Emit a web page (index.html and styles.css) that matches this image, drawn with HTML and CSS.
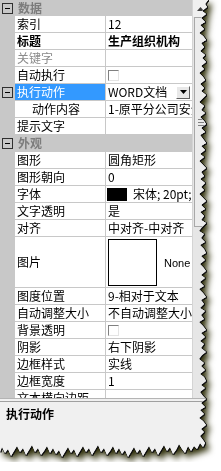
FILE: index.html
```html
<!DOCTYPE html>
<html>
<head>
<meta charset="utf-8">
<link rel="stylesheet" href="styles.css">
</head>
<body>
<div class="sheet">
  <div class="paper">
    <div class="top">
      <div class="grid">
        <div class="hdr first"><span class="tog"></span><span class="htext">数据</span></div>
        <div class="row"><span class="gut"></span><span class="name">索引</span><span class="val">12</span></div>
        <div class="row"><span class="gut"></span><span class="name b">标题</span><span class="val b">生产组织机构</span></div>
        <div class="row"><span class="gut"></span><span class="name dis">关键字</span><span class="val"></span></div>
        <div class="row"><span class="gut"></span><span class="name">自动执行</span><span class="val"><span class="chk"></span></span></div>
        <div class="row"><span class="gut"><span class="tog"></span></span><span class="name sel">执行动作</span><span class="val combo"><span class="ctext">WORD文档</span><span class="dd"><svg width="7" height="4" viewBox="0 0 7 4"><path d="M0 0H7L3.5 4Z" fill="#000"/></svg></span></span></div>
        <div class="row"><span class="gut"></span><span class="name ind">动作内容</span><span class="val">1-原平分公司安全生产</span></div>
        <div class="row"><span class="gut"></span><span class="name">提示文字</span><span class="val"></span></div>
        <div class="hdr"><span class="tog"></span><span class="htext">外观</span></div>
        <div class="row"><span class="gut"></span><span class="name">图形</span><span class="val">圆角矩形</span></div>
        <div class="row"><span class="gut"></span><span class="name">图形朝向</span><span class="val">0</span></div>
        <div class="row"><span class="gut"></span><span class="name">字体</span><span class="val"><span class="swatch"></span><span>宋体; 20pt;</span></span></div>
        <div class="row"><span class="gut"></span><span class="name">文字透明</span><span class="val">是</span></div>
        <div class="row"><span class="gut"></span><span class="name">对齐</span><span class="val">中对齐-中对齐</span></div>
        <div class="row tall"><span class="gut"></span><span class="name">图片</span><span class="val pic"><span class="picbox"></span><span class="none">None</span></span></div>
        <div class="row"><span class="gut"></span><span class="name">图度位置</span><span class="val">9-相对于文本</span></div>
        <div class="row"><span class="gut"></span><span class="name">自动调整大小</span><span class="val">不自动调整大小</span></div>
        <div class="row"><span class="gut"></span><span class="name">背景透明</span><span class="val"><span class="chk"></span></span></div>
        <div class="row"><span class="gut"></span><span class="name">阴影</span><span class="val">右下阴影</span></div>
        <div class="row"><span class="gut"></span><span class="name">边框样式</span><span class="val">实线</span></div>
        <div class="row"><span class="gut"></span><span class="name">边框宽度</span><span class="val">1</span></div>
        <div class="row"><span class="gut"></span><span class="name">文本横向边距</span><span class="val"></span></div>
      </div>
      <div class="scroll">
        <div class="sbtn"><svg width="7" height="4" viewBox="0 0 7 4"><path d="M0 4H7L3.5 0Z" fill="#404040"/></svg></div>
        <div class="thumb"><span class="grip"></span></div>
      </div>
    </div>
    <div class="splitter"></div>
    <div class="desc"><div class="dtitle">执行动作</div></div>
  </div>
</div>
</body>
</html>
```
FILE: styles.css
```css
html, body {
  margin: 0;
  padding: 0;
  background: #fff;
}
body {
  font-family: "Noto Sans CJK SC", "Liberation Sans", sans-serif;
  font-size: 12px;
  color: #000;
}
.sheet {
  width: 212px;
  filter: drop-shadow(1px 0 0 #111) drop-shadow(0 1px 0 #111) drop-shadow(3px 4px 3px #2c2c06);
}
.paper {
  width: 212px;
  height: 462px;
  background: #f0f0f0;
  display: flex;
  flex-direction: column;
  clip-path: polygon(0 0, 208px 0, 205px 4px, 207px 7px, 202px 11px, 206px 14px, 201px 18px, 205px 22px, 200px 25px, 204px 29px, 199px 33px, 203px 36px, 206px 40px, 201px 43px, 204px 47px, 200px 51px, 205px 55px, 202px 58px, 206px 62px, 201px 66px, 204px 69px, 199px 73px, 203px 77px, 205px 80px, 200px 84px, 204px 88px, 201px 91px, 206px 95px, 202px 99px, 199px 102px, 204px 106px, 201px 110px, 205px 113px, 200px 117px, 204px 121px, 206px 124px, 201px 128px, 205px 132px, 200px 135px, 203px 139px, 206px 143px, 201px 146px, 205px 150px, 200px 154px, 204px 157px, 199px 161px, 203px 165px, 206px 168px, 201px 172px, 204px 176px, 200px 179px, 205px 183px, 201px 187px, 204px 190px, 199px 194px, 203px 198px, 206px 201px, 201px 205px, 205px 209px, 200px 212px, 204px 216px, 201px 220px, 206px 223px, 202px 227px, 199px 231px, 204px 234px, 201px 238px, 205px 242px, 200px 245px, 204px 249px, 206px 253px, 201px 256px, 205px 260px, 200px 264px, 203px 267px, 206px 271px, 201px 275px, 205px 278px, 200px 282px, 204px 286px, 199px 289px, 203px 293px, 206px 297px, 201px 300px, 204px 304px, 200px 308px, 205px 311px, 201px 315px, 204px 319px, 199px 322px, 203px 326px, 206px 330px, 201px 333px, 205px 337px, 200px 341px, 204px 344px, 201px 348px, 206px 352px, 202px 355px, 199px 359px, 204px 363px, 201px 366px, 205px 370px, 200px 374px, 204px 377px, 206px 381px, 201px 385px, 205px 388px, 200px 392px, 203px 396px, 206px 399px, 201px 403px, 205px 407px, 200px 410px, 204px 414px, 199px 418px, 203px 421px, 206px 425px, 201px 429px, 204px 432px, 200px 436px, 203px 440px, 205px 443px, 203px 447px, 200px 443px, 197px 449px, 194px 446px, 191px 451px, 188px 446px, 185px 453px, 182px 449px, 179px 444px, 176px 450px, 173px 454px, 170px 447px, 167px 451px, 164px 445px, 161px 450px, 158px 455px, 155px 448px, 152px 452px, 149px 446px, 146px 451px, 143px 456px, 140px 449px, 137px 453px, 134px 447px, 131px 452px, 128px 457px, 125px 450px, 122px 454px, 119px 448px, 116px 453px, 113px 446px, 110px 451px, 107px 455px, 104px 448px, 101px 452px, 98px 445px, 95px 450px, 92px 455px, 89px 448px, 86px 452px, 83px 446px, 80px 451px, 77px 456px, 74px 449px, 71px 453px, 68px 447px, 65px 452px, 62px 457px, 59px 450px, 56px 454px, 53px 448px, 50px 453px, 47px 446px, 44px 451px, 41px 455px, 38px 448px, 35px 452px, 32px 445px, 29px 450px, 26px 455px, 23px 448px, 20px 452px, 17px 446px, 14px 451px, 11px 456px, 8px 449px, 5px 453px, 2px 447px, 0 452px);
}
.top {
  display: flex;
  height: 398px;
  flex: none;
  overflow: hidden;
}
.grid {
  width: 192px;
  flex: none;
  background: #fff;
  display: flex;
  flex-direction: column;
  overflow: hidden;
}
.hdr {
  height: 17px;
  flex: none;
  background: #c8c8c8;
  display: flex;
  align-items: flex-start;
}
.hdr.first {
  height: 16px;
}
.hdr .tog {
  margin: 3px 0 0 2px;
}
.htext {
  margin-left: 5px;
  line-height: 16px;
  font-weight: bold;
  color: #7c7c7c;
}
.tog {
  width: 9px;
  height: 9px;
  border: 1px solid #303030;
  display: block;
  position: relative;
  flex: none;
}
.tog::after {
  content: "";
  position: absolute;
  left: 2px;
  top: 4px;
  width: 5px;
  height: 1px;
  background: #000;
}
.row {
  display: grid;
  grid-template-columns: 15px 91px 86px;
  height: 17px;
  flex: none;
}
.row.tall {
  height: 51px;
}
.gut {
  background: #c8c8c8;
  display: block;
  padding: 3px 0 0 2px;
}
.name {
  border-right: 1px solid #c8c8c8;
  border-bottom: 1px solid #c8c8c8;
  padding-left: 2px;
  line-height: 16px;
  white-space: nowrap;
  overflow: hidden;
  display: flex;
  align-items: center;
}
.name.b, .val.b {
  font-weight: bold;
}
.name.dis {
  color: #8a8a8a;
}
.name.sel {
  background: #3399ff;
  color: #fff;
}
.name.ind {
  padding-left: 17px;
}
.val {
  border-bottom: 1px solid #c8c8c8;
  padding-left: 2px;
  line-height: 16px;
  white-space: nowrap;
  overflow: hidden;
  display: flex;
  align-items: center;
}
.chk {
  width: 9px;
  height: 9px;
  background: #fff;
  border: 1px solid;
  border-color: #808080 #e4e4e4 #e4e4e4 #808080;
  display: block;
}
.combo {
  justify-content: space-between;
  padding-right: 2px;
}
.dd {
  width: 14px;
  height: 13px;
  box-sizing: border-box;
  background: #e8e8e8;
  border: 1px solid;
  border-color: #fff #606060 #606060 #fff;
  display: flex;
  align-items: center;
  justify-content: center;
  flex: none;
}
.swatch {
  width: 20px;
  height: 13px;
  background: #000;
  display: block;
  margin: 0 6px 0 -1px;
  flex: none;
}
.pic {
  align-items: center;
}
.picbox {
  width: 47px;
  height: 45px;
  background: #fff;
  border: 1px solid #000;
  display: block;
  flex: none;
}
.none {
  margin-left: 7px;
  font-family: "Liberation Sans", sans-serif;
  font-size: 11px;
  padding-top: 2px;
}
.scroll {
  width: 20px;
  flex: none;
  background: #e6e6e6;
  border-left: 1px solid #d4d4d4;
  display: flex;
  flex-direction: column;
}
.sbtn {
  height: 17px;
  background: #f0f0f0;
  display: flex;
  align-items: center;
  padding-left: 4px;
}
.thumb {
  height: 208px;
  margin-left: 1px;
  background: #ececec;
  border: 1px solid #a8a8a8;
  border-right: none;
  display: flex;
  align-items: center;
  padding-left: 3px;
}
.grip {
  width: 6px;
  height: 5px;
  display: block;
  border-top: 1px solid #808080;
  border-bottom: 1px solid #808080;
  position: relative;
}
.grip::after {
  content: "";
  position: absolute;
  left: 0;
  top: 2px;
  width: 6px;
  height: 1px;
  background: #808080;
}
.splitter {
  height: 4px;
  flex: none;
  box-sizing: border-box;
  border-top: 1px solid #b4b4b4;
  border-bottom: 1px solid #a0a0a0;
  background: #f0f0f0;
}
.desc {
  flex: 1;
  background: #f0f0f0;
  padding: 4px 0 0 6px;
}
.dtitle {
  font-weight: bold;
  line-height: 16px;
}
```
